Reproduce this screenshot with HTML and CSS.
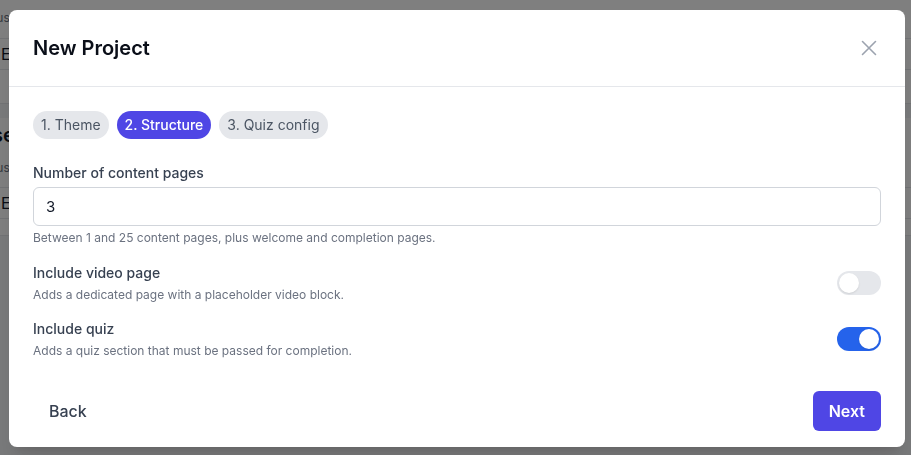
FILE: index.html
```html
<!DOCTYPE html>
<html lang="en">
<head>
<meta charset="utf-8">
<title>New Project</title>
<link rel="stylesheet" href="styles.css">
</head>
<body>
<div class="page">
  <section class="bg-card bg-card-top">
    <div class="bg-row bg-head"><span class="bg-small">Status</span></div>
    <div class="bg-row"><span class="bg-cell">Edit</span></div>
    <div class="bg-row bg-row-empty"></div>
  </section>
  <section class="bg-card bg-card-second">
    <h2 class="bg-title">Courses</h2>
    <div class="bg-row bg-head2"><span class="bg-small">Status</span></div>
    <div class="bg-row"><span class="bg-cell">Edit</span></div>
    <div class="bg-row bg-row-short"></div>
  </section>
</div>

<div class="overlay">
  <div class="modal" role="dialog" aria-labelledby="modal-title">
    <header class="modal-header">
      <h1 id="modal-title" class="modal-title">New Project</h1>
      <button class="close-btn" aria-label="Close">
        <svg width="16" height="16" viewBox="0 0 16 16" fill="none" stroke="currentColor" stroke-width="1.6" stroke-linecap="round">
          <path d="M1.5 1.5 14.5 14.5M14.5 1.5 1.5 14.5"/>
        </svg>
      </button>
    </header>

    <div class="modal-body">
      <nav class="steps">
        <span class="step">1. Theme</span>
        <span class="step step-active">2. Structure</span>
        <span class="step">3. Quiz config</span>
      </nav>

      <div class="field">
        <label class="label" for="pages">Number of content pages</label>
        <input id="pages" class="input" type="text" value="3">
        <p class="help">Between 1 and 25 content pages, plus welcome and completion pages.</p>
      </div>

      <div class="toggle-row">
        <div class="toggle-text">
          <div class="label">Include video page</div>
          <p class="desc">Adds a dedicated page with a placeholder video block.</p>
        </div>
        <span class="switch"><span class="knob"></span></span>
      </div>

      <div class="toggle-row">
        <div class="toggle-text">
          <div class="label">Include quiz</div>
          <p class="desc">Adds a quiz section that must be passed for completion.</p>
        </div>
        <span class="switch switch-on"><span class="knob"></span></span>
      </div>
    </div>

    <footer class="modal-footer">
      <button class="btn btn-ghost">Back</button>
      <button class="btn btn-primary">Next</button>
    </footer>
  </div>
</div>
</body>
</html>
```

FILE: styles.css
```css
* { box-sizing: border-box; }

html, body {
  margin: 0;
  padding: 0;
  height: 100%;
}

body {
  font-family: Inter, "Noto Sans", "Liberation Sans", sans-serif;
  background: #f3f4f6;
  color: #111827;
  overflow: hidden;
}

/* ---------- background page (under overlay) ---------- */
.page {
  height: 100vh;
  display: flex;
  flex-direction: column;
}

.bg-card {
  background: #ffffff;
}

.bg-card-top {
  margin-top: -10px;
}

.bg-card-second {
  margin-top: 14px;
  padding-top: 4px;
}

.bg-row {
  border-bottom: 1px solid #e5e7eb;
  display: flex;
  align-items: center;
  height: 31px;
}

.bg-head {
  height: 49px;
  align-items: flex-start;
  padding-top: 20px;
}

.bg-head2 {
  height: 40px;
}

.bg-row > span {
  margin-left: -26px;
}

.bg-row-empty { height: 34px; }
.bg-row-short { height: 17px; }

.bg-small {
  font-size: 12px;
  color: #6b7280;
}

.bg-row > .bg-cell {
  font-size: 16px;
  color: #111827;
  margin-left: 1px;
}

.bg-title {
  margin: 0 0 0 -55px;
  font-size: 20px;
  font-weight: 600;
  height: 26px;
  line-height: 26px;
}

/* ---------- overlay & modal ---------- */
.overlay {
  position: fixed;
  inset: 0;
  background: rgba(0, 0, 0, 0.5);
  padding: 10px 0 0 9px;
}

.modal {
  width: 896px;
  background: #ffffff;
  border-radius: 8px;
  box-shadow: 0 20px 25px -5px rgba(0,0,0,0.1), 0 8px 10px -6px rgba(0,0,0,0.1);
  display: flex;
  flex-direction: column;
}

.modal-header {
  display: flex;
  align-items: center;
  justify-content: space-between;
  padding: 24px;
  border-bottom: 1px solid #e5e7eb;
}

.modal-title {
  margin: 0;
  font-size: 20px;
  line-height: 28px;
  font-weight: 600;
  color: #0b0f19;
}

.close-btn {
  border: 0;
  background: transparent;
  color: #9ca3af;
  padding: 0;
  width: 16px;
  height: 16px;
  margin-right: 4px;
  display: flex;
  cursor: pointer;
}

.modal-body {
  padding: 24px 24px 15px;
  display: flex;
  flex-direction: column;
}

.steps {
  display: flex;
  gap: 8px;
  margin-bottom: 24px;
}

.step {
  display: inline-block;
  height: 28px;
  line-height: 28px;
  padding: 0 8px;
  border-radius: 9999px;
  background: #e5e7eb;
  color: #4b5563;
  font-size: 14px;
  font-weight: 400;
}

.step-active {
  background: #4f46e5;
  color: #ffffff;
  font-weight: 500;
}

.field {
  display: flex;
  flex-direction: column;
  margin-bottom: 17px;
}

.label {
  font-size: 14px;
  line-height: 20px;
  font-weight: 500;
  color: #374151;
}

.field .label {
  margin-bottom: 4px;
}

.input {
  height: 39px;
  border: 1px solid #d1d5db;
  border-radius: 6px;
  padding: 0 12px;
  font-family: inherit;
  font-size: 15px;
  color: #111827;
  outline: none;
}

.help, .desc {
  margin: 4px 0 0;
  font-size: 12px;
  line-height: 16px;
  color: #6b7280;
}

.toggle-row {
  display: flex;
  align-items: center;
  justify-content: space-between;
}

.toggle-row + .toggle-row {
  margin-top: 16px;
}

.switch {
  width: 44px;
  height: 24px;
  border-radius: 9999px;
  background: #e5e7eb;
  padding: 2px;
  display: flex;
  justify-content: flex-start;
}

.switch-on {
  background: #2563eb;
  justify-content: flex-end;
}

.knob {
  width: 20px;
  height: 20px;
  border-radius: 50%;
  background: #ffffff;
  box-shadow: 0 1px 2px rgba(0,0,0,0.1);
}

.modal-footer {
  display: flex;
  justify-content: space-between;
  align-items: center;
  padding: 17px 24px 16px;
}

.btn {
  height: 40px;
  padding: 0 16px;
  border: 0;
  border-radius: 6px;
  font-family: inherit;
  font-size: 16px;
  cursor: pointer;
}

.btn-ghost {
  background: transparent;
  color: #374151;
  font-weight: 500;
}

.btn-primary {
  background: #4f46e5;
  color: #ffffff;
  font-weight: 600;
}
```
